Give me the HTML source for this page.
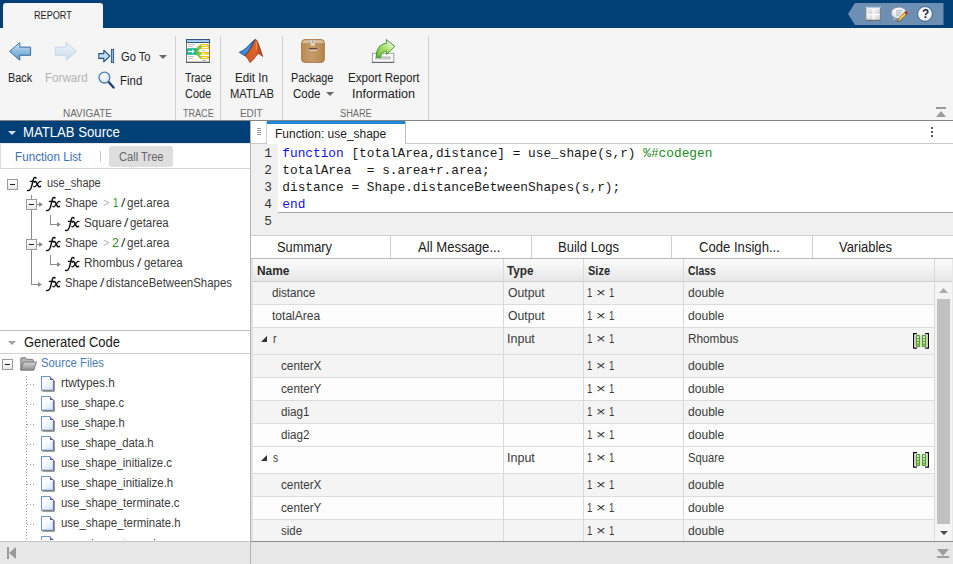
<!DOCTYPE html>
<html>
<head>
<meta charset="utf-8">
<title>Code Generation Report</title>
<style>
*{box-sizing:border-box;margin:0;padding:0}
html,body{width:953px;height:564px;overflow:hidden;background:#f5f5f5;font-family:"Liberation Sans",sans-serif;font-size:12px;color:#333}
.a{position:absolute}
.t{position:absolute;white-space:pre;line-height:1;transform-origin:0 0}
svg{position:absolute;overflow:visible}
</style>
</head>
<body>
<div class="a" style="left:0px;top:0px;width:953px;height:28px;background:#004076;"></div>
<div class="a" style="left:3px;top:3px;width:100px;height:26px;background:#f5f5f5;border-radius:3px 3px 0 0;"></div>
<svg style="left:848px;top:3px" width="96" height="22" viewBox="0 0 96 22"><polygon points="0,11 7,0 95.5,0 95.5,22 7,22" fill="#6d8fb3"/></svg>
<svg style="left:865px;top:6px" width="16" height="15" viewBox="0 0 16 15">
<defs><linearGradient id="lc" x1="0" y1="0" x2="1" y2="1"><stop offset="0" stop-color="#f6f6f6"/><stop offset="1" stop-color="#cfcfcf"/></linearGradient></defs>
<rect x="0.5" y="0.3" width="15.2" height="14.3" fill="#ffffff"/>
<rect x="0.5" y="0.4" width="15.2" height="1.9" fill="#a8cbee"/>
<path d="M0.5 0.4H15.7" stroke="#6f7b88" stroke-width="0.7"/>
<rect x="1.2" y="2.8" width="6.3" height="5" fill="url(#lc)"/><rect x="8.8" y="2.8" width="6.3" height="5" fill="url(#lc)"/>
<rect x="1.2" y="9" width="6.3" height="4.8" fill="url(#lc)"/><rect x="8.8" y="9" width="6.3" height="4.8" fill="url(#lc)"/>
<path d="M0.8 1.5V14.2H15.4V1.5" fill="none" stroke="#747474" stroke-width="1"/>
<path d="M0.5 14.5H15.7" stroke="#666" stroke-width="0.8"/>
</svg>
<svg style="left:890px;top:6px" width="18" height="17" viewBox="0 0 18 17">
<defs><radialGradient id="gb" cx="0.4" cy="0.3" r="0.8"><stop offset="0" stop-color="#ffffff"/><stop offset="1" stop-color="#cfd8e0"/></radialGradient></defs>
<path d="M3.6 12.2 L3.2 14.6 L6 13" fill="#e6ebef" stroke="#8593a0" stroke-width="0.6"/>
<ellipse cx="8.9" cy="7" rx="7.8" ry="5.9" fill="url(#gb)" stroke="#7e8b98" stroke-width="0.8"/>
<path d="M6 4.8H12M6 6.9H11.6M6 9H10" stroke="#8f979f" stroke-width="0.8"/>
<path d="M7.4 15.6 L8.4 12.6 L14.4 6.5 L16.4 8.4 L10.4 14.6 Z" fill="#f2b930" stroke="#6a4c10" stroke-width="0.6" stroke-linejoin="round"/>
<path d="M9.4 13.4 L15.2 7.4" stroke="#fbe28e" stroke-width="0.9"/>
<path d="M14.4 6.5 L15.2 5.7 Q16.2 5 17 5.9 Q17.7 6.8 17 7.7 L16.4 8.4 Z" fill="#d8362f" stroke="#7d1c14" stroke-width="0.5"/>
<path d="M7.4 15.6 L8.4 12.6 L10.4 14.6 Z" fill="#f1dcb0" stroke="#6a4c10" stroke-width="0.5"/>
<path d="M7.4 15.6 L7.8 14.4 L8.6 15.1 Z" fill="#222"/>
</svg>
<svg style="left:917px;top:6px" width="16" height="16" viewBox="0 0 16 16">
<defs><radialGradient id="gh" cx="0.4" cy="0.3" r="0.8"><stop offset="0" stop-color="#ffffff"/><stop offset="0.7" stop-color="#f2f4f8"/><stop offset="1" stop-color="#b5c3d6"/></radialGradient></defs>
<circle cx="8" cy="8" r="7.4" fill="url(#gh)" stroke="#274a7c" stroke-width="0.8"/>
</svg>
<div class="a" style="left:0px;top:28px;width:953px;height:92px;background:#f5f5f5;"></div>
<div class="a" style="left:0px;top:120px;width:953px;height:1px;background:#858585;"></div>
<div class="a" style="left:175px;top:36px;width:1px;height:84px;background:#d0d0d0;"></div>
<div class="a" style="left:220px;top:36px;width:1px;height:84px;background:#d0d0d0;"></div>
<div class="a" style="left:282px;top:36px;width:1px;height:84px;background:#d0d0d0;"></div>
<div class="a" style="left:428px;top:36px;width:1px;height:84px;background:#d0d0d0;"></div>
<svg style="left:8px;top:41px" width="24" height="21" viewBox="0 0 24 21">
<defs><linearGradient id="ga" x1="0" y1="0" x2="0" y2="1"><stop offset="0" stop-color="#d6e8f6"/><stop offset="0.5" stop-color="#8fbde0"/><stop offset="1" stop-color="#5f9acb"/></linearGradient>
<linearGradient id="gf" x1="0" y1="0" x2="0" y2="1"><stop offset="0" stop-color="#eef3f8"/><stop offset="1" stop-color="#ccdceb"/></linearGradient></defs>
<path d="M1.6 10.4 L11.8 1.6 L11.8 6.1 L22.6 6.1 L22.6 14.3 L11.8 14.3 L11.8 19.2 Z" fill="url(#ga)" stroke="#336fa6" stroke-width="1" stroke-linejoin="round"/>
</svg>
<svg style="left:54px;top:41px" width="24" height="21" viewBox="0 0 24 21">
<path d="M22.4 10.4 L12.2 1.6 L12.2 6.1 L1.4 6.1 L1.4 14.3 L12.2 14.3 L12.2 19.2 Z" fill="url(#gf)" stroke="#c6d6e6" stroke-width="1" stroke-linejoin="round"/>
</svg>
<svg style="left:98px;top:48px" width="17" height="16" viewBox="0 0 17 16">
<path d="M0.8 5.6 H5.8 V2.2 L11.8 8 L5.8 13.8 V10.4 H0.8 Z" fill="#c4ddf1" stroke="#1f5486" stroke-width="1.1" stroke-linejoin="round"/>
<rect x="13.4" y="1.4" width="2.2" height="13.2" fill="#8dbbe0" stroke="#1f5486" stroke-width="0.9"/>
</svg>
<svg style="left:159px;top:55px" width="8" height="4" viewBox="0 0 8 4"><polygon points="0,0 8,0 4,4" fill="#6a6a6a"/></svg>
<svg style="left:98px;top:71px" width="17" height="18" viewBox="0 0 17 18">
<defs><radialGradient id="gm" cx="0.4" cy="0.35" r="0.7"><stop offset="0" stop-color="#ffffff"/><stop offset="1" stop-color="#d5e4f1"/></radialGradient></defs>
<path d="M10.2 10.6 L15.6 16.6" stroke="#1d3f6a" stroke-width="2.3" stroke-linecap="round"/>
<circle cx="6.4" cy="6.6" r="5.4" fill="url(#gm)" stroke="#4a7fb2" stroke-width="1.3"/>
</svg>
<svg style="left:186px;top:39px" width="24" height="24" viewBox="0 0 24 24">
<defs><linearGradient id="tg" x1="0" y1="0" x2="1" y2="0"><stop offset="0" stop-color="#3db56e"/><stop offset="0.55" stop-color="#8cc63f"/><stop offset="1" stop-color="#c9c928"/></linearGradient></defs>
<rect x="0.5" y="0.5" width="23" height="23" fill="#ffffff" stroke="#6f757c"/>
<rect x="0" y="0" width="24" height="4" fill="#34567a"/>
<rect x="1" y="1.1" width="22" height="1.9" fill="#a9d3f4"/>
<rect x="0" y="22.7" width="24" height="1.3" fill="#555a60"/>
<path d="M2 5.6H8.8M2 7.6H7M2 17.6H8M2 19.6H7" stroke="#b9b9b9" stroke-width="0.9"/>
<path d="M16 11.6H19M16 21.5H20" stroke="#a9b0b8" stroke-width="0.9"/>
<path d="M9 9.2 C12.5 9 12.5 5.2 16.5 5 V9.8 C14 10 13 11 12.2 12 C13 12.6 14 13 16.5 13 V15.6 C15 15.7 14.6 16 14 16.4 C14.6 16.8 15 17 16.5 17 V20.2 C12.5 20 12.5 16 9 15.8 Z" fill="url(#tg)"/>
<rect x="15.6" y="5" width="7.4" height="4.8" fill="#fcc60e"/>
<rect x="15.6" y="13" width="7.4" height="2.6" fill="#fcc60e"/>
<rect x="15.6" y="17" width="7.4" height="3.2" fill="#fcc60e"/>
<path d="M16.2 6.6H21M16.2 8.5H22M16.2 14.4H19M16.2 18.6H21" stroke="#ffffff" stroke-width="0.9"/>
<rect x="1" y="9.2" width="8.6" height="6.6" fill="#19b891"/>
<path d="M2 12.5H6.5" stroke="#fff" stroke-width="1.3"/>
<path d="M6 10.2 L8.7 12.5 L6 14.8 Z" fill="#fff"/>
</svg>
<svg style="left:239px;top:39px" width="24" height="24" viewBox="0 0 24 24">
<defs><linearGradient id="ml1" x1="0" y1="1" x2="1" y2="0"><stop offset="0" stop-color="#2f7fd0"/><stop offset="0.5" stop-color="#3f97e2"/><stop offset="1" stop-color="#1b5fae"/></linearGradient>
<linearGradient id="ml2" x1="0" y1="0" x2="1" y2="0"><stop offset="0" stop-color="#d2571f"/><stop offset="0.55" stop-color="#dc632a"/><stop offset="1" stop-color="#b83a1a"/></linearGradient></defs>
<path d="M0.3 13.3 C3 12.4 5 10.8 7 9.2 C10.4 6.4 13 2.4 16.3 0.4 L17 1.2 L6.2 16.9 Z" fill="url(#ml1)" stroke="#174a86" stroke-width="0.9" stroke-linejoin="round"/>
<path d="M6.1 16.7 L9.3 13 C11 10.6 13 7.6 14.4 4.6 C15 3 15.8 1.4 16.6 0.6 C18 0.8 19.2 4.4 20.2 7 C21.2 9.8 22.4 13.6 23.7 17.5 C22 16.2 20.6 15 19.4 14.6 C17.4 16 16 18.4 14.6 20 C13.4 21.4 12.2 22.6 10.9 23.6 C9.6 20.6 8 18.2 6.1 16.7 Z" fill="url(#ml2)" stroke="#8b1d12" stroke-width="0.7" stroke-linejoin="round"/>
<path d="M17.2 2.6 C17.4 5.4 17.4 8.4 17.3 11.4" stroke="#f7b45e" stroke-width="1" fill="none" stroke-dasharray="1.6 0.5"/>
</svg>
<svg style="left:301px;top:39px" width="24" height="24" viewBox="0 0 24 24">
<defs><linearGradient id="pk" x1="0" y1="0" x2="1" y2="0"><stop offset="0" stop-color="#b98a55"/><stop offset="0.45" stop-color="#c69b68"/><stop offset="1" stop-color="#b4854f"/></linearGradient></defs>
<rect x="0.6" y="0.6" width="22.8" height="22.8" rx="3.4" fill="url(#pk)" stroke="#a6743e" stroke-width="0.9"/>
<path d="M1.2 4.2 Q1.2 1.2 4 1.2 H20 Q22.8 1.2 22.8 4.2 Z" fill="#dcc19c"/>
<path d="M1 4.4 H23" stroke="#b08a5c" stroke-width="0.6"/>
<rect x="9.8" y="0.9" width="4" height="5.8" fill="#e6ded2" opacity="0.9"/>
<rect x="11.3" y="1" width="1.2" height="3.2" fill="#8fa3bd"/>
<path d="M6 8V22M18 8V22" stroke="#cfa878" stroke-width="0.5" stroke-dasharray="1 1"/>
<rect x="8" y="9.2" width="8" height="1.4" fill="#4a3542"/>
<path d="M8.6 9.7H15.4" stroke="#b8343a" stroke-width="0.6" stroke-dasharray="0.8 0.8"/>
<rect x="8" y="10.6" width="8" height="1.1" fill="#efe5d6"/>
</svg>
<svg style="left:326px;top:92px" width="8" height="4" viewBox="0 0 8 4"><polygon points="0,0 8,0 4,4" fill="#6a6a6a"/></svg>
<svg style="left:371px;top:39px" width="24" height="24" viewBox="0 0 24 24">
<defs><linearGradient id="ex" x1="0" y1="1" x2="1" y2="0"><stop offset="0" stop-color="#5fb83a"/><stop offset="0.45" stop-color="#a9dc6c"/><stop offset="0.8" stop-color="#e4f6cf"/><stop offset="1" stop-color="#b9e58e"/></linearGradient></defs>
<rect x="1.4" y="14.3" width="21.4" height="9" fill="#fafafa" stroke="#9a9a9a" stroke-width="0.9"/>
<path d="M1 23.4 H23.2" stroke="#555" stroke-width="0.9"/>
<rect x="4" y="17.3" width="15.8" height="3.2" fill="#c6c6c6"/>
<path d="M5.4 18.4 C4.8 10 9 5 15.4 4.3 L15.4 0.5 L23.7 7.4 L15.7 15.4 L15.5 12.2 C12.4 12.4 10 14 9.8 18.4 Z" fill="url(#ex)" stroke="#2f8f22" stroke-width="0.9" stroke-linejoin="round"/>
</svg>
<div class="a" style="left:936px;top:107px;width:10px;height:2px;background:#9b9b9b;"></div>
<svg style="left:936px;top:111px" width="10" height="6" viewBox="0 0 10 6"><polygon points="0,6 10,6 5,0" fill="#9b9b9b"/></svg>
<div class="a" style="left:0px;top:121px;width:250px;height:443px;background:#ffffff;"></div>
<div class="a" style="left:0px;top:121px;width:250px;height:22px;background:#004076;"></div>
<svg style="left:8px;top:131px" width="8" height="4" viewBox="0 0 8 4"><polygon points="0,0 8,0 4,4" fill="#d4dde8"/></svg>
<div class="a" style="left:100px;top:151px;width:1px;height:11px;background:#c8c8c8;"></div>
<div class="a" style="left:109px;top:146px;width:64px;height:21px;background:#dedede;border-radius:3px;"></div>
<div class="a" style="left:0px;top:168px;width:250px;height:1px;background:#d6d6d6;"></div>
<div class="a" style="left:7px;top:179px;width:11px;height:11px;border:1px solid #9a9a9a;background:linear-gradient(#fdfdfd,#e9e9e9)"></div>
<div class="a" style="left:10px;top:184px;width:5px;height:1px;background:#222;"></div>
<div class="a" style="left:31px;top:195px;width:1px;height:89px;background:#8a8a8a;"></div>
<div class="a" style="left:26px;top:199px;width:11px;height:11px;border:1px solid #9a9a9a;background:linear-gradient(#fdfdfd,#e9e9e9)"></div>
<div class="a" style="left:29px;top:204px;width:5px;height:1px;background:#222;"></div>
<div class="a" style="left:26px;top:239px;width:11px;height:11px;border:1px solid #9a9a9a;background:linear-gradient(#fdfdfd,#e9e9e9)"></div>
<div class="a" style="left:29px;top:244px;width:5px;height:1px;background:#222;"></div>
<div class="a" style="left:37px;top:204px;width:3px;height:1px;background:#8a8a8a;"></div>
<svg style="left:39px;top:202px" width="4" height="5" viewBox="0 0 4 5"><polygon points="0,0 4,2.5 0,5" fill="#8a8a8a"/></svg>
<div class="a" style="left:37px;top:244px;width:3px;height:1px;background:#8a8a8a;"></div>
<svg style="left:39px;top:242px" width="4" height="5" viewBox="0 0 4 5"><polygon points="0,0 4,2.5 0,5" fill="#8a8a8a"/></svg>
<div class="a" style="left:31px;top:284px;width:8px;height:1px;background:#8a8a8a;"></div>
<svg style="left:38px;top:282px" width="4" height="5" viewBox="0 0 4 5"><polygon points="0,0 4,2.5 0,5" fill="#8a8a8a"/></svg>
<div class="a" style="left:50px;top:215px;width:1px;height:10px;background:#8a8a8a;"></div>
<div class="a" style="left:50px;top:224px;width:8px;height:1px;background:#8a8a8a;"></div>
<svg style="left:57px;top:222px" width="4" height="5" viewBox="0 0 4 5"><polygon points="0,0 4,2.5 0,5" fill="#8a8a8a"/></svg>
<div class="a" style="left:50px;top:255px;width:1px;height:10px;background:#8a8a8a;"></div>
<div class="a" style="left:50px;top:264px;width:8px;height:1px;background:#8a8a8a;"></div>
<svg style="left:57px;top:262px" width="4" height="5" viewBox="0 0 4 5"><polygon points="0,0 4,2.5 0,5" fill="#8a8a8a"/></svg>
<svg style="left:25.5px;top:176px" width="16" height="16" viewBox="0 0 16 16" fill="none" stroke="#111" stroke-linecap="round" stroke-linejoin="round">
<path d="M10 2.1 C9.6 1.3 8.6 1.1 8 1.9 C7.2 3.1 6.8 5.6 6.1 8.6 C5.5 11.2 5.1 12.9 4.1 13.8 C3.3 14.5 2.3 14.6 1.5 14.4" stroke-width="1.5"/>
<path d="M4.2 5.3 H8.6" stroke-width="1.15"/>
<path d="M8.4 5.9 C9 5.2 9.9 5.3 10.4 6.4 L12.2 9.8 C12.7 10.9 13.7 11 14.5 10.3" stroke-width="1.6"/>
<path d="M15 5.6 C14.3 5.1 13.5 5.3 12.9 6.1 L9.7 10.1 C9.1 10.9 8.4 11 7.8 10.5" stroke-width="1.2"/>
</svg>
<svg style="left:45.0px;top:196px" width="16" height="16" viewBox="0 0 16 16" fill="none" stroke="#111" stroke-linecap="round" stroke-linejoin="round">
<path d="M10 2.1 C9.6 1.3 8.6 1.1 8 1.9 C7.2 3.1 6.8 5.6 6.1 8.6 C5.5 11.2 5.1 12.9 4.1 13.8 C3.3 14.5 2.3 14.6 1.5 14.4" stroke-width="1.5"/>
<path d="M4.2 5.3 H8.6" stroke-width="1.15"/>
<path d="M8.4 5.9 C9 5.2 9.9 5.3 10.4 6.4 L12.2 9.8 C12.7 10.9 13.7 11 14.5 10.3" stroke-width="1.6"/>
<path d="M15 5.6 C14.3 5.1 13.5 5.3 12.9 6.1 L9.7 10.1 C9.1 10.9 8.4 11 7.8 10.5" stroke-width="1.2"/>
</svg>
<svg style="left:64.0px;top:216px" width="16" height="16" viewBox="0 0 16 16" fill="none" stroke="#111" stroke-linecap="round" stroke-linejoin="round">
<path d="M10 2.1 C9.6 1.3 8.6 1.1 8 1.9 C7.2 3.1 6.8 5.6 6.1 8.6 C5.5 11.2 5.1 12.9 4.1 13.8 C3.3 14.5 2.3 14.6 1.5 14.4" stroke-width="1.5"/>
<path d="M4.2 5.3 H8.6" stroke-width="1.15"/>
<path d="M8.4 5.9 C9 5.2 9.9 5.3 10.4 6.4 L12.2 9.8 C12.7 10.9 13.7 11 14.5 10.3" stroke-width="1.6"/>
<path d="M15 5.6 C14.3 5.1 13.5 5.3 12.9 6.1 L9.7 10.1 C9.1 10.9 8.4 11 7.8 10.5" stroke-width="1.2"/>
</svg>
<svg style="left:45.0px;top:236px" width="16" height="16" viewBox="0 0 16 16" fill="none" stroke="#111" stroke-linecap="round" stroke-linejoin="round">
<path d="M10 2.1 C9.6 1.3 8.6 1.1 8 1.9 C7.2 3.1 6.8 5.6 6.1 8.6 C5.5 11.2 5.1 12.9 4.1 13.8 C3.3 14.5 2.3 14.6 1.5 14.4" stroke-width="1.5"/>
<path d="M4.2 5.3 H8.6" stroke-width="1.15"/>
<path d="M8.4 5.9 C9 5.2 9.9 5.3 10.4 6.4 L12.2 9.8 C12.7 10.9 13.7 11 14.5 10.3" stroke-width="1.6"/>
<path d="M15 5.6 C14.3 5.1 13.5 5.3 12.9 6.1 L9.7 10.1 C9.1 10.9 8.4 11 7.8 10.5" stroke-width="1.2"/>
</svg>
<svg style="left:64.0px;top:256px" width="16" height="16" viewBox="0 0 16 16" fill="none" stroke="#111" stroke-linecap="round" stroke-linejoin="round">
<path d="M10 2.1 C9.6 1.3 8.6 1.1 8 1.9 C7.2 3.1 6.8 5.6 6.1 8.6 C5.5 11.2 5.1 12.9 4.1 13.8 C3.3 14.5 2.3 14.6 1.5 14.4" stroke-width="1.5"/>
<path d="M4.2 5.3 H8.6" stroke-width="1.15"/>
<path d="M8.4 5.9 C9 5.2 9.9 5.3 10.4 6.4 L12.2 9.8 C12.7 10.9 13.7 11 14.5 10.3" stroke-width="1.6"/>
<path d="M15 5.6 C14.3 5.1 13.5 5.3 12.9 6.1 L9.7 10.1 C9.1 10.9 8.4 11 7.8 10.5" stroke-width="1.2"/>
</svg>
<svg style="left:45.0px;top:276px" width="16" height="16" viewBox="0 0 16 16" fill="none" stroke="#111" stroke-linecap="round" stroke-linejoin="round">
<path d="M10 2.1 C9.6 1.3 8.6 1.1 8 1.9 C7.2 3.1 6.8 5.6 6.1 8.6 C5.5 11.2 5.1 12.9 4.1 13.8 C3.3 14.5 2.3 14.6 1.5 14.4" stroke-width="1.5"/>
<path d="M4.2 5.3 H8.6" stroke-width="1.15"/>
<path d="M8.4 5.9 C9 5.2 9.9 5.3 10.4 6.4 L12.2 9.8 C12.7 10.9 13.7 11 14.5 10.3" stroke-width="1.6"/>
<path d="M15 5.6 C14.3 5.1 13.5 5.3 12.9 6.1 L9.7 10.1 C9.1 10.9 8.4 11 7.8 10.5" stroke-width="1.2"/>
</svg>
<div class="a" style="left:0px;top:330px;width:250px;height:1px;background:#bdbdbd;"></div>
<div class="a" style="left:0px;top:353px;width:250px;height:1px;background:#d0d0d0;"></div>
<svg style="left:8px;top:341px" width="8" height="4" viewBox="0 0 8 4"><polygon points="0,0 8,0 4,4" fill="#a0a0a0"/></svg>
<div class="a" style="left:2px;top:359px;width:11px;height:11px;border:1px solid #9a9a9a;background:linear-gradient(#fdfdfd,#e9e9e9)"></div>
<div class="a" style="left:5px;top:364px;width:5px;height:1px;background:#222;"></div>
<svg style="left:20px;top:357px" width="17" height="14" viewBox="0 0 17 14">
<defs><linearGradient id="fo" x1="0" y1="0" x2="0" y2="1"><stop offset="0" stop-color="#d8d8d8"/><stop offset="1" stop-color="#8e8e8e"/></linearGradient></defs>
<path d="M0.8 13 V1.6 Q0.8 0.8 1.6 0.8 H5.6 L6.8 2.4 H12.6 Q13.4 2.4 13.4 3.2 V5" fill="#b5b5b5" stroke="#6f6f6f" stroke-width="0.9"/>
<path d="M0.8 13.2 L3.4 5 H16.4 L13.8 13.2 Z" fill="url(#fo)" stroke="#6f6f6f" stroke-width="0.9" stroke-linejoin="round"/>
</svg>
<div class="a" style="left:26px;top:376px;width:1px;height:165px;background:repeating-linear-gradient(#9c9c9c 0 1px,transparent 1px 3px)"></div>
<div class="a" style="left:27px;top:384px;width:9px;height:1px;background:repeating-linear-gradient(90deg,#9c9c9c 0 1px,transparent 1px 3px)"></div>
<svg style="left:41px;top:376px" width="15" height="17" viewBox="0 0 15 17">
<defs><linearGradient id="fi0" x1="0" y1="0" x2="0.8" y2="1"><stop offset="0.35" stop-color="#ffffff"/><stop offset="1" stop-color="#d3e8ff"/></linearGradient></defs>
<path d="M1.6 15.4 H13.5 V4.6" fill="none" stroke="#9a9a7c" stroke-width="1"/>
<path d="M0.5 0.5 H9.2 L12.5 3.8 V14.4 H0.5 Z" fill="url(#fi0)"/>
<path d="M12.4 3.8 V14.3 H0.5" fill="none" stroke="#5c5c9e" stroke-width="1"/>
<path d="M0.5 14.3 V0.5 H9.2" fill="none" stroke="#6b8fd8" stroke-width="1"/>
<path d="M9 0.3 L12.7 4 H9 Z" fill="#5a5ca4"/>
<rect x="9.8" y="2.2" width="0.9" height="0.9" fill="#9fc0ee"/>
</svg>
<div class="a" style="left:27px;top:404px;width:9px;height:1px;background:repeating-linear-gradient(90deg,#9c9c9c 0 1px,transparent 1px 3px)"></div>
<svg style="left:41px;top:396px" width="15" height="17" viewBox="0 0 15 17">
<defs><linearGradient id="fi1" x1="0" y1="0" x2="0.8" y2="1"><stop offset="0.35" stop-color="#ffffff"/><stop offset="1" stop-color="#d3e8ff"/></linearGradient></defs>
<path d="M1.6 15.4 H13.5 V4.6" fill="none" stroke="#9a9a7c" stroke-width="1"/>
<path d="M0.5 0.5 H9.2 L12.5 3.8 V14.4 H0.5 Z" fill="url(#fi1)"/>
<path d="M12.4 3.8 V14.3 H0.5" fill="none" stroke="#5c5c9e" stroke-width="1"/>
<path d="M0.5 14.3 V0.5 H9.2" fill="none" stroke="#6b8fd8" stroke-width="1"/>
<path d="M9 0.3 L12.7 4 H9 Z" fill="#5a5ca4"/>
<rect x="9.8" y="2.2" width="0.9" height="0.9" fill="#9fc0ee"/>
</svg>
<div class="a" style="left:27px;top:424px;width:9px;height:1px;background:repeating-linear-gradient(90deg,#9c9c9c 0 1px,transparent 1px 3px)"></div>
<svg style="left:41px;top:416px" width="15" height="17" viewBox="0 0 15 17">
<defs><linearGradient id="fi2" x1="0" y1="0" x2="0.8" y2="1"><stop offset="0.35" stop-color="#ffffff"/><stop offset="1" stop-color="#d3e8ff"/></linearGradient></defs>
<path d="M1.6 15.4 H13.5 V4.6" fill="none" stroke="#9a9a7c" stroke-width="1"/>
<path d="M0.5 0.5 H9.2 L12.5 3.8 V14.4 H0.5 Z" fill="url(#fi2)"/>
<path d="M12.4 3.8 V14.3 H0.5" fill="none" stroke="#5c5c9e" stroke-width="1"/>
<path d="M0.5 14.3 V0.5 H9.2" fill="none" stroke="#6b8fd8" stroke-width="1"/>
<path d="M9 0.3 L12.7 4 H9 Z" fill="#5a5ca4"/>
<rect x="9.8" y="2.2" width="0.9" height="0.9" fill="#9fc0ee"/>
</svg>
<div class="a" style="left:27px;top:444px;width:9px;height:1px;background:repeating-linear-gradient(90deg,#9c9c9c 0 1px,transparent 1px 3px)"></div>
<svg style="left:41px;top:436px" width="15" height="17" viewBox="0 0 15 17">
<defs><linearGradient id="fi3" x1="0" y1="0" x2="0.8" y2="1"><stop offset="0.35" stop-color="#ffffff"/><stop offset="1" stop-color="#d3e8ff"/></linearGradient></defs>
<path d="M1.6 15.4 H13.5 V4.6" fill="none" stroke="#9a9a7c" stroke-width="1"/>
<path d="M0.5 0.5 H9.2 L12.5 3.8 V14.4 H0.5 Z" fill="url(#fi3)"/>
<path d="M12.4 3.8 V14.3 H0.5" fill="none" stroke="#5c5c9e" stroke-width="1"/>
<path d="M0.5 14.3 V0.5 H9.2" fill="none" stroke="#6b8fd8" stroke-width="1"/>
<path d="M9 0.3 L12.7 4 H9 Z" fill="#5a5ca4"/>
<rect x="9.8" y="2.2" width="0.9" height="0.9" fill="#9fc0ee"/>
</svg>
<div class="a" style="left:27px;top:464px;width:9px;height:1px;background:repeating-linear-gradient(90deg,#9c9c9c 0 1px,transparent 1px 3px)"></div>
<svg style="left:41px;top:456px" width="15" height="17" viewBox="0 0 15 17">
<defs><linearGradient id="fi4" x1="0" y1="0" x2="0.8" y2="1"><stop offset="0.35" stop-color="#ffffff"/><stop offset="1" stop-color="#d3e8ff"/></linearGradient></defs>
<path d="M1.6 15.4 H13.5 V4.6" fill="none" stroke="#9a9a7c" stroke-width="1"/>
<path d="M0.5 0.5 H9.2 L12.5 3.8 V14.4 H0.5 Z" fill="url(#fi4)"/>
<path d="M12.4 3.8 V14.3 H0.5" fill="none" stroke="#5c5c9e" stroke-width="1"/>
<path d="M0.5 14.3 V0.5 H9.2" fill="none" stroke="#6b8fd8" stroke-width="1"/>
<path d="M9 0.3 L12.7 4 H9 Z" fill="#5a5ca4"/>
<rect x="9.8" y="2.2" width="0.9" height="0.9" fill="#9fc0ee"/>
</svg>
<div class="a" style="left:27px;top:484px;width:9px;height:1px;background:repeating-linear-gradient(90deg,#9c9c9c 0 1px,transparent 1px 3px)"></div>
<svg style="left:41px;top:476px" width="15" height="17" viewBox="0 0 15 17">
<defs><linearGradient id="fi5" x1="0" y1="0" x2="0.8" y2="1"><stop offset="0.35" stop-color="#ffffff"/><stop offset="1" stop-color="#d3e8ff"/></linearGradient></defs>
<path d="M1.6 15.4 H13.5 V4.6" fill="none" stroke="#9a9a7c" stroke-width="1"/>
<path d="M0.5 0.5 H9.2 L12.5 3.8 V14.4 H0.5 Z" fill="url(#fi5)"/>
<path d="M12.4 3.8 V14.3 H0.5" fill="none" stroke="#5c5c9e" stroke-width="1"/>
<path d="M0.5 14.3 V0.5 H9.2" fill="none" stroke="#6b8fd8" stroke-width="1"/>
<path d="M9 0.3 L12.7 4 H9 Z" fill="#5a5ca4"/>
<rect x="9.8" y="2.2" width="0.9" height="0.9" fill="#9fc0ee"/>
</svg>
<div class="a" style="left:27px;top:504px;width:9px;height:1px;background:repeating-linear-gradient(90deg,#9c9c9c 0 1px,transparent 1px 3px)"></div>
<svg style="left:41px;top:496px" width="15" height="17" viewBox="0 0 15 17">
<defs><linearGradient id="fi6" x1="0" y1="0" x2="0.8" y2="1"><stop offset="0.35" stop-color="#ffffff"/><stop offset="1" stop-color="#d3e8ff"/></linearGradient></defs>
<path d="M1.6 15.4 H13.5 V4.6" fill="none" stroke="#9a9a7c" stroke-width="1"/>
<path d="M0.5 0.5 H9.2 L12.5 3.8 V14.4 H0.5 Z" fill="url(#fi6)"/>
<path d="M12.4 3.8 V14.3 H0.5" fill="none" stroke="#5c5c9e" stroke-width="1"/>
<path d="M0.5 14.3 V0.5 H9.2" fill="none" stroke="#6b8fd8" stroke-width="1"/>
<path d="M9 0.3 L12.7 4 H9 Z" fill="#5a5ca4"/>
<rect x="9.8" y="2.2" width="0.9" height="0.9" fill="#9fc0ee"/>
</svg>
<div class="a" style="left:27px;top:524px;width:9px;height:1px;background:repeating-linear-gradient(90deg,#9c9c9c 0 1px,transparent 1px 3px)"></div>
<svg style="left:41px;top:516px" width="15" height="17" viewBox="0 0 15 17">
<defs><linearGradient id="fi7" x1="0" y1="0" x2="0.8" y2="1"><stop offset="0.35" stop-color="#ffffff"/><stop offset="1" stop-color="#d3e8ff"/></linearGradient></defs>
<path d="M1.6 15.4 H13.5 V4.6" fill="none" stroke="#9a9a7c" stroke-width="1"/>
<path d="M0.5 0.5 H9.2 L12.5 3.8 V14.4 H0.5 Z" fill="url(#fi7)"/>
<path d="M12.4 3.8 V14.3 H0.5" fill="none" stroke="#5c5c9e" stroke-width="1"/>
<path d="M0.5 14.3 V0.5 H9.2" fill="none" stroke="#6b8fd8" stroke-width="1"/>
<path d="M9 0.3 L12.7 4 H9 Z" fill="#5a5ca4"/>
<rect x="9.8" y="2.2" width="0.9" height="0.9" fill="#9fc0ee"/>
</svg>
<div class="a" style="left:27px;top:544px;width:9px;height:1px;background:repeating-linear-gradient(90deg,#9c9c9c 0 1px,transparent 1px 3px)"></div>
<svg style="left:41px;top:536px" width="15" height="17" viewBox="0 0 15 17">
<defs><linearGradient id="fi8" x1="0" y1="0" x2="0.8" y2="1"><stop offset="0.35" stop-color="#ffffff"/><stop offset="1" stop-color="#d3e8ff"/></linearGradient></defs>
<path d="M1.6 15.4 H13.5 V4.6" fill="none" stroke="#9a9a7c" stroke-width="1"/>
<path d="M0.5 0.5 H9.2 L12.5 3.8 V14.4 H0.5 Z" fill="url(#fi8)"/>
<path d="M12.4 3.8 V14.3 H0.5" fill="none" stroke="#5c5c9e" stroke-width="1"/>
<path d="M0.5 14.3 V0.5 H9.2" fill="none" stroke="#6b8fd8" stroke-width="1"/>
<path d="M9 0.3 L12.7 4 H9 Z" fill="#5a5ca4"/>
<rect x="9.8" y="2.2" width="0.9" height="0.9" fill="#9fc0ee"/>
</svg>
<div class="a" style="left:0px;top:540px;width:250px;height:1px;background:#ffffff;z-index:5;"></div>
<div class="a" style="left:0px;top:541px;width:250px;height:1px;background:#c6c6c6;z-index:5;"></div>
<div class="a" style="left:0px;top:542px;width:250px;height:22px;background:#e7e7e7;z-index:5;"></div>
<div class="a" style="left:7px;top:547px;width:2px;height:12px;background:#9a9a9a;z-index:6;"></div>
<svg style="z-index:6;left:9px;top:547px" width="7" height="12" viewBox="0 0 7 12"><polygon points="7,0 7,12 0,6" fill="#9a9a9a"/></svg>
<div class="a" style="left:0px;top:143px;width:1px;height:26px;background:#dcdcdc;"></div>
<div class="a" style="left:0px;top:143px;width:250px;height:1px;background:#e9e9e9;"></div>
<div class="a" style="left:250px;top:121px;width:1px;height:443px;background:#b4b4b4;"></div>
<div class="a" style="left:251px;top:121px;width:702px;height:443px;background:#ffffff;"></div>
<div class="a" style="left:251px;top:143px;width:702px;height:1px;background:#c9c9c9;"></div>
<div class="a" style="left:266px;top:121px;width:1px;height:22px;background:#d0d0d0;"></div>
<div class="a" style="left:257px;top:128px;width:4px;height:1px;background:#9a9a9a;"></div>
<div class="a" style="left:257px;top:130px;width:4px;height:1px;background:#9a9a9a;"></div>
<div class="a" style="left:257px;top:132px;width:4px;height:1px;background:#9a9a9a;"></div>
<div class="a" style="left:257px;top:134px;width:4px;height:1px;background:#9a9a9a;"></div>
<div class="a" style="left:267px;top:121px;width:138px;height:3px;background:#1f86d8;"></div>
<div class="a" style="left:405px;top:121px;width:1px;height:22px;background:#bdbdbd;"></div>
<div class="a" style="left:267px;top:143px;width:138px;height:1px;background:#ffffff;"></div>
<div class="a" style="left:931px;top:127px;width:2px;height:2px;background:#5a5a5a;"></div>
<div class="a" style="left:931px;top:131px;width:2px;height:2px;background:#5a5a5a;"></div>
<div class="a" style="left:931px;top:135px;width:2px;height:2px;background:#5a5a5a;"></div>
<div class="a" style="left:251px;top:144px;width:27px;height:92px;background:#f0f0f0;"></div>
<div class="a" style="left:278px;top:213px;width:675px;height:23px;background:#f0f0f0;"></div>
<div class="a" style="left:278px;top:212px;width:675px;height:1px;background:#a9a9a9;"></div>
<div class="a" style="left:251px;top:235px;width:702px;height:1px;background:#cfcfcf;"></div>
<div class="a" style="left:251px;top:236px;width:702px;height:22px;background:#ffffff;"></div>
<div class="a" style="left:251px;top:258px;width:702px;height:1px;background:#b9b9b9;"></div>
<div class="a" style="left:390px;top:236px;width:1px;height:22px;background:#cfcfcf;"></div>
<div class="a" style="left:531px;top:236px;width:1px;height:22px;background:#cfcfcf;"></div>
<div class="a" style="left:671px;top:236px;width:1px;height:22px;background:#cfcfcf;"></div>
<div class="a" style="left:812px;top:236px;width:1px;height:22px;background:#cfcfcf;"></div>
<div class="a" style="left:251px;top:259px;width:2px;height:283px;background:#e2e2e2;"></div>
<div class="a" style="left:253px;top:259px;width:682px;height:22px;background:linear-gradient(#fbfbfb,#f3f3f3 45%,#e6e6e6);"></div>
<div class="a" style="left:935px;top:259px;width:18px;height:22px;background:linear-gradient(#fbfbfb,#f3f3f3 45%,#e6e6e6);"></div>
<div class="a" style="left:253px;top:281px;width:700px;height:1px;background:#cdcdcd;"></div>
<div class="a" style="left:935px;top:282px;width:18px;height:259px;background:#f4f4f4;"></div>
<div class="a" style="left:253px;top:282px;width:682px;height:22px;background:#f4f4f4;"></div>
<div class="a" style="left:253px;top:304px;width:682px;height:1px;background:#dcdcdc;"></div>
<div class="a" style="left:253px;top:305px;width:682px;height:22px;background:#fdfdfd;"></div>
<div class="a" style="left:253px;top:327px;width:682px;height:1px;background:#dcdcdc;"></div>
<div class="a" style="left:253px;top:328px;width:682px;height:26px;background:#f4f4f4;"></div>
<div class="a" style="left:253px;top:354px;width:682px;height:1px;background:#dcdcdc;"></div>
<svg style="left:261px;top:336px" width="6" height="6" viewBox="0 0 6 6"><polygon points="6,0 6,6 0,6" fill="#333"/></svg>
<svg style="left:913px;top:333px" width="16" height="16" viewBox="0 0 16 16">
<path d="M4 0.6 H0.6 V15.2 H4 M12.1 0.6 H15.4 V15.2 H12.1" fill="none" stroke="#ffffff" stroke-width="2.6" opacity="0.9"/>
<path d="M4 0.6 H0.6 V15.2 H4 M12.1 0.6 H15.4 V15.2 H12.1" fill="none" stroke="#0a0a0a" stroke-width="1.2"/>
<rect x="3.1" y="2.3" width="3.7" height="11.4" rx="0.5" fill="#5ca336" stroke="#3f8526" stroke-width="0.7"/>
<rect x="9.2" y="2.3" width="3.7" height="11.4" rx="0.5" fill="#5ca336" stroke="#3f8526" stroke-width="0.7"/>
<rect x="4.1" y="3.2" width="1.7" height="1.7" fill="#ffffff"/><rect x="4.1" y="6.1" width="1.7" height="1.7" fill="#f1fbd6"/><rect x="4.1" y="9" width="1.7" height="1.7" fill="#d9f08c"/><rect x="4.1" y="11.7" width="1.7" height="1.2" fill="#b5df4e"/>
<rect x="10.2" y="3.2" width="1.7" height="1.7" fill="#ffffff"/><rect x="10.2" y="6.1" width="1.7" height="1.7" fill="#f1fbd6"/><rect x="10.2" y="9" width="1.7" height="1.7" fill="#d9f08c"/><rect x="10.2" y="11.7" width="1.7" height="1.2" fill="#b5df4e"/>
</svg>
<div class="a" style="left:253px;top:355px;width:682px;height:22px;background:#f4f4f4;"></div>
<div class="a" style="left:253px;top:377px;width:682px;height:1px;background:#dcdcdc;"></div>
<div class="a" style="left:253px;top:378px;width:682px;height:22px;background:#fdfdfd;"></div>
<div class="a" style="left:253px;top:400px;width:682px;height:1px;background:#dcdcdc;"></div>
<div class="a" style="left:253px;top:401px;width:682px;height:22px;background:#f4f4f4;"></div>
<div class="a" style="left:253px;top:423px;width:682px;height:1px;background:#dcdcdc;"></div>
<div class="a" style="left:253px;top:424px;width:682px;height:22px;background:#fdfdfd;"></div>
<div class="a" style="left:253px;top:446px;width:682px;height:1px;background:#dcdcdc;"></div>
<div class="a" style="left:253px;top:447px;width:682px;height:26px;background:#fdfdfd;"></div>
<div class="a" style="left:253px;top:473px;width:682px;height:1px;background:#dcdcdc;"></div>
<svg style="left:261px;top:455px" width="6" height="6" viewBox="0 0 6 6"><polygon points="6,0 6,6 0,6" fill="#333"/></svg>
<svg style="left:913px;top:452px" width="16" height="16" viewBox="0 0 16 16">
<path d="M4 0.6 H0.6 V15.2 H4 M12.1 0.6 H15.4 V15.2 H12.1" fill="none" stroke="#ffffff" stroke-width="2.6" opacity="0.9"/>
<path d="M4 0.6 H0.6 V15.2 H4 M12.1 0.6 H15.4 V15.2 H12.1" fill="none" stroke="#0a0a0a" stroke-width="1.2"/>
<rect x="3.1" y="2.3" width="3.7" height="11.4" rx="0.5" fill="#5ca336" stroke="#3f8526" stroke-width="0.7"/>
<rect x="9.2" y="2.3" width="3.7" height="11.4" rx="0.5" fill="#5ca336" stroke="#3f8526" stroke-width="0.7"/>
<rect x="4.1" y="3.2" width="1.7" height="1.7" fill="#ffffff"/><rect x="4.1" y="6.1" width="1.7" height="1.7" fill="#f1fbd6"/><rect x="4.1" y="9" width="1.7" height="1.7" fill="#d9f08c"/><rect x="4.1" y="11.7" width="1.7" height="1.2" fill="#b5df4e"/>
<rect x="10.2" y="3.2" width="1.7" height="1.7" fill="#ffffff"/><rect x="10.2" y="6.1" width="1.7" height="1.7" fill="#f1fbd6"/><rect x="10.2" y="9" width="1.7" height="1.7" fill="#d9f08c"/><rect x="10.2" y="11.7" width="1.7" height="1.2" fill="#b5df4e"/>
</svg>
<div class="a" style="left:253px;top:474px;width:682px;height:22px;background:#f4f4f4;"></div>
<div class="a" style="left:253px;top:496px;width:682px;height:1px;background:#dcdcdc;"></div>
<div class="a" style="left:253px;top:497px;width:682px;height:22px;background:#fdfdfd;"></div>
<div class="a" style="left:253px;top:519px;width:682px;height:1px;background:#dcdcdc;"></div>
<div class="a" style="left:253px;top:520px;width:682px;height:21px;background:#f4f4f4;"></div>
<div class="a" style="left:253px;top:541px;width:682px;height:1px;background:#dcdcdc;"></div>
<div class="a" style="left:503px;top:259px;width:1px;height:282px;background:#d9d9d9;"></div>
<div class="a" style="left:583px;top:259px;width:1px;height:282px;background:#d9d9d9;"></div>
<div class="a" style="left:683px;top:259px;width:1px;height:282px;background:#d9d9d9;"></div>
<div class="a" style="left:934px;top:259px;width:1px;height:282px;background:#d9d9d9;"></div>
<svg style="left:939px;top:288px" width="9" height="5" viewBox="0 0 9 5"><polygon points="0,5 9,5 4.5,0" fill="#a9a9a9"/></svg>
<div class="a" style="left:937px;top:299px;width:13px;height:225px;background:#c1c1c1;"></div>
<svg style="left:940px;top:531px" width="8" height="4" viewBox="0 0 8 4"><polygon points="0,0 8,0 4,4" fill="#4a4a4a"/></svg>
<div class="a" style="left:251px;top:541px;width:702px;height:1px;background:#8c8c8c;"></div>
<div class="a" style="left:251px;top:542px;width:702px;height:22px;background:#e7e7e7;"></div>
<div class="a" style="left:952px;top:259px;width:1px;height:282px;background:#e7e7e7;"></div>
<svg style="left:937px;top:549px" width="12" height="7" viewBox="0 0 12 7"><polygon points="0,0 12,0 6,7" fill="#9e9e9e"/></svg>
<div class="a" style="left:937px;top:556px;width:12px;height:2px;background:#9e9e9e;"></div>
<div class="t" style="left:34.00px;top:10.29px;font-size:11px;color:#222;transform:scaleX(0.8275);">REPORT</div>
<div class="t" style="left:921.60px;top:7.47px;font-size:13.5px;color:#1b2450;font-weight:bold;transform:scaleX(0.8750);">?</div>
<div class="t" style="left:8.00px;top:71.84px;font-size:12px;color:#222;transform:scaleX(0.9033);">Back</div>
<div class="t" style="left:45.00px;top:71.84px;font-size:12px;color:#b4b4b4;transform:scaleX(0.9692);">Forward</div>
<div class="t" style="left:121.00px;top:51.14px;font-size:12px;color:#222;transform:scaleX(0.9276);">Go To</div>
<div class="t" style="left:120.30px;top:75.14px;font-size:12px;color:#222;transform:scaleX(0.9528);">Find</div>
<div class="t" style="left:184.50px;top:71.84px;font-size:12px;color:#222;transform:scaleX(0.8837);">Trace</div>
<div class="t" style="left:185.00px;top:87.84px;font-size:12px;color:#222;transform:scaleX(0.9134);">Code</div>
<div class="t" style="left:235.40px;top:71.84px;font-size:12px;color:#222;transform:scaleX(0.9686);">Edit In</div>
<div class="t" style="left:229.50px;top:87.84px;font-size:12px;color:#222;transform:scaleX(0.9338);">MATLAB</div>
<div class="t" style="left:291.40px;top:71.84px;font-size:12px;color:#222;transform:scaleX(0.9059);">Package</div>
<div class="t" style="left:292.60px;top:87.84px;font-size:12px;color:#222;transform:scaleX(0.9547);">Code</div>
<div class="t" style="left:347.50px;top:71.84px;font-size:12px;color:#222;transform:scaleX(0.9665);">Export Report</div>
<div class="t" style="left:351.95px;top:87.84px;font-size:12px;color:#222;transform:scaleX(1.0505);">Information</div>
<div class="t" style="left:63.30px;top:108.83px;font-size:10px;color:#6a6a6a;transform:scaleX(0.9957);">NAVIGATE</div>
<div class="t" style="left:182.50px;top:108.83px;font-size:10px;color:#6a6a6a;transform:scaleX(0.9059);">TRACE</div>
<div class="t" style="left:240.00px;top:108.83px;font-size:10px;color:#6a6a6a;transform:scaleX(0.9925);">EDIT</div>
<div class="t" style="left:339.50px;top:108.83px;font-size:10px;color:#6a6a6a;transform:scaleX(0.9200);">SHARE</div>
<div class="t" style="left:22.66px;top:125.45px;font-size:14px;color:#ffffff;transform:scaleX(0.9391);">MATLAB Source</div>
<div class="t" style="left:15.00px;top:151.14px;font-size:12px;color:#3a6fb5;transform:scaleX(0.9753);">Function List</div>
<div class="t" style="left:118.50px;top:151.14px;font-size:12px;color:#666;transform:scaleX(0.9267);">Call Tree</div>
<div class="t" style="left:46.80px;top:176.84px;font-size:12px;color:#3c3c3c;transform:scaleX(0.9146);">use_shape</div>
<div class="t" style="left:64.80px;top:196.84px;font-size:12px;color:#3c3c3c;transform:scaleX(0.9365);">Shape</div>
<div class="t" style="left:102.90px;top:196.84px;font-size:12px;color:#b8b8b8;transform:scaleX(0.9143);">&gt;</div>
<div class="t" style="left:112.60px;top:196.84px;font-size:12px;color:#2a8c2a;transform:scaleX(0.8000);">1</div>
<div class="t" style="left:120.60px;top:196.84px;font-size:12px;color:#3c3c3c;transform:scaleX(1.3000);">/</div>
<div class="t" style="left:126.80px;top:196.84px;font-size:12px;color:#3c3c3c;transform:scaleX(0.9603);">get.area</div>
<div class="t" style="left:84.30px;top:216.84px;font-size:12px;color:#3c3c3c;transform:scaleX(0.9738);">Square</div>
<div class="t" style="left:124.30px;top:216.84px;font-size:12px;color:#3c3c3c;transform:scaleX(1.3000);">/</div>
<div class="t" style="left:130.00px;top:216.84px;font-size:12px;color:#3c3c3c;transform:scaleX(0.9506);">getarea</div>
<div class="t" style="left:64.80px;top:236.84px;font-size:12px;color:#3c3c3c;transform:scaleX(0.9365);">Shape</div>
<div class="t" style="left:102.90px;top:236.84px;font-size:12px;color:#b8b8b8;transform:scaleX(0.9143);">&gt;</div>
<div class="t" style="left:112.30px;top:236.84px;font-size:12px;color:#2a8c2a;transform:scaleX(1.0286);">2</div>
<div class="t" style="left:120.60px;top:236.84px;font-size:12px;color:#3c3c3c;transform:scaleX(1.3000);">/</div>
<div class="t" style="left:126.80px;top:236.84px;font-size:12px;color:#3c3c3c;transform:scaleX(0.9603);">get.area</div>
<div class="t" style="left:84.30px;top:256.84px;font-size:12px;color:#3c3c3c;transform:scaleX(0.9833);">Rhombus</div>
<div class="t" style="left:137.20px;top:256.84px;font-size:12px;color:#3c3c3c;transform:scaleX(1.3000);">/</div>
<div class="t" style="left:143.60px;top:256.84px;font-size:12px;color:#3c3c3c;transform:scaleX(0.9506);">getarea</div>
<div class="t" style="left:64.80px;top:276.84px;font-size:12px;color:#3c3c3c;transform:scaleX(0.9365);">Shape</div>
<div class="t" style="left:99.60px;top:276.84px;font-size:12px;color:#3c3c3c;transform:scaleX(1.3000);">/</div>
<div class="t" style="left:106.00px;top:276.84px;font-size:12px;color:#3c3c3c;transform:scaleX(0.9539);">distanceBetweenShapes</div>
<div class="t" style="left:23.60px;top:334.85px;font-size:14px;color:#1a1a1a;transform:scaleX(0.9274);">Generated Code</div>
<div class="t" style="left:40.80px;top:356.54px;font-size:12px;color:#4a7db3;transform:scaleX(0.9446);">Source Files</div>
<div class="t" style="left:60.80px;top:376.54px;font-size:12px;color:#3c3c3c;transform:scaleX(0.9850);">rtwtypes.h</div>
<div class="t" style="left:60.80px;top:396.54px;font-size:12px;color:#3c3c3c;transform:scaleX(0.9258);">use_shape.c</div>
<div class="t" style="left:60.80px;top:416.54px;font-size:12px;color:#3c3c3c;transform:scaleX(0.9258);">use_shape.h</div>
<div class="t" style="left:60.80px;top:436.54px;font-size:12px;color:#3c3c3c;transform:scaleX(0.9380);">use_shape_data.h</div>
<div class="t" style="left:60.80px;top:456.54px;font-size:12px;color:#3c3c3c;transform:scaleX(0.9454);">use_shape_initialize.c</div>
<div class="t" style="left:60.80px;top:476.54px;font-size:12px;color:#3c3c3c;transform:scaleX(0.9497);">use_shape_initialize.h</div>
<div class="t" style="left:60.80px;top:496.54px;font-size:12px;color:#3c3c3c;transform:scaleX(0.9499);">use_shape_terminate.c</div>
<div class="t" style="left:60.80px;top:516.54px;font-size:12px;color:#3c3c3c;transform:scaleX(0.9539);">use_shape_terminate.h</div>
<div class="t" style="left:60.80px;top:537.84px;font-size:12px;color:#3c3c3c;transform:scaleX(0.9477);">use_shape_types.h</div>
<div class="t" style="left:275.00px;top:127.94px;font-size:12px;color:#222;transform:scaleX(0.9979);">Function: use_shape</div>
<div class="t" style="left:264.20px;top:147.69px;font-size:12.8px;color:#333;font-family:'Liberation Mono',monospace;">1</div>
<div class="t" style="left:264.20px;top:164.69px;font-size:12.8px;color:#333;font-family:'Liberation Mono',monospace;">2</div>
<div class="t" style="left:264.20px;top:181.69px;font-size:12.8px;color:#333;font-family:'Liberation Mono',monospace;">3</div>
<div class="t" style="left:264.20px;top:198.69px;font-size:12.8px;color:#333;font-family:'Liberation Mono',monospace;">4</div>
<div class="t" style="left:264.20px;top:215.69px;font-size:12.8px;color:#333;font-family:'Liberation Mono',monospace;">5</div>
<div class="t" style="left:282.30px;top:147.69px;font-size:12.8px;color:#1111ee;font-family:'Liberation Mono',monospace;">function</div>
<div class="t" style="left:351.42px;top:147.69px;font-size:12.8px;color:#1a1a1a;font-family:'Liberation Mono',monospace;">[totalArea,distance] = use_shape(s,r)</div>
<div class="t" style="left:643.26px;top:147.69px;font-size:12.8px;color:#228b22;font-family:'Liberation Mono',monospace;">%#codegen</div>
<div class="t" style="left:282.30px;top:164.69px;font-size:12.8px;color:#1a1a1a;font-family:'Liberation Mono',monospace;">totalArea  = s.area+r.area;</div>
<div class="t" style="left:282.30px;top:181.69px;font-size:12.8px;color:#1a1a1a;font-family:'Liberation Mono',monospace;">distance = Shape.distanceBetweenShapes(s,r);</div>
<div class="t" style="left:282.30px;top:198.69px;font-size:12.8px;color:#1111ee;font-family:'Liberation Mono',monospace;">end</div>
<div class="t" style="left:277.00px;top:240.15px;font-size:14px;color:#222;transform:scaleX(0.9183);">Summary</div>
<div class="t" style="left:418.20px;top:240.15px;font-size:14px;color:#222;transform:scaleX(0.9364);">All Message...</div>
<div class="t" style="left:557.57px;top:240.15px;font-size:14px;color:#222;transform:scaleX(0.9320);">Build Logs</div>
<div class="t" style="left:698.50px;top:240.15px;font-size:14px;color:#222;transform:scaleX(0.9357);">Code Insigh...</div>
<div class="t" style="left:838.50px;top:240.15px;font-size:14px;color:#222;transform:scaleX(0.9245);">Variables</div>
<div class="t" style="left:256.50px;top:265.44px;font-size:12px;color:#2a2a2a;font-weight:bold;transform:scaleX(0.9936);">Name</div>
<div class="t" style="left:507.40px;top:265.44px;font-size:12px;color:#2a2a2a;font-weight:bold;transform:scaleX(0.9766);">Type</div>
<div class="t" style="left:587.50px;top:265.44px;font-size:12px;color:#2a2a2a;font-weight:bold;transform:scaleX(0.9204);">Size</div>
<div class="t" style="left:687.50px;top:265.44px;font-size:12px;color:#2a2a2a;font-weight:bold;transform:scaleX(0.8687);">Class</div>
<div class="t" style="left:272.30px;top:287.14px;font-size:12px;color:#3a3a3a;transform:scaleX(0.9684);">distance</div>
<div class="t" style="left:507.60px;top:286.84px;font-size:12px;color:#3a3a3a;transform:scaleX(1.0194);">Output</div>
<div class="t" style="left:587.40px;top:286.84px;font-size:12px;color:#3a3a3a;transform:scaleX(0.8000);">1</div>
<div class="t" style="left:595.50px;top:286.30px;font-size:13px;color:#3a3a3a;transform:scaleX(1.2857);">×</div>
<div class="t" style="left:608.80px;top:286.84px;font-size:12px;color:#3a3a3a;transform:scaleX(0.8000);">1</div>
<div class="t" style="left:687.50px;top:286.84px;font-size:12px;color:#3a3a3a;transform:scaleX(1.0066);">double</div>
<div class="t" style="left:272.30px;top:310.14px;font-size:12px;color:#3a3a3a;transform:scaleX(1.0051);">totalArea</div>
<div class="t" style="left:507.60px;top:309.84px;font-size:12px;color:#3a3a3a;transform:scaleX(1.0194);">Output</div>
<div class="t" style="left:587.40px;top:309.84px;font-size:12px;color:#3a3a3a;transform:scaleX(0.8000);">1</div>
<div class="t" style="left:595.50px;top:309.30px;font-size:13px;color:#3a3a3a;transform:scaleX(1.2857);">×</div>
<div class="t" style="left:608.80px;top:309.84px;font-size:12px;color:#3a3a3a;transform:scaleX(0.8000);">1</div>
<div class="t" style="left:687.50px;top:309.84px;font-size:12px;color:#3a3a3a;transform:scaleX(1.0066);">double</div>
<div class="t" style="left:272.80px;top:332.84px;font-size:12px;color:#3a3a3a;transform:scaleX(0.8750);">r</div>
<div class="t" style="left:506.56px;top:332.84px;font-size:12px;color:#3a3a3a;transform:scaleX(1.0434);">Input</div>
<div class="t" style="left:587.40px;top:332.84px;font-size:12px;color:#3a3a3a;transform:scaleX(0.8000);">1</div>
<div class="t" style="left:595.50px;top:332.30px;font-size:13px;color:#3a3a3a;transform:scaleX(1.2857);">×</div>
<div class="t" style="left:608.80px;top:332.84px;font-size:12px;color:#3a3a3a;transform:scaleX(0.8000);">1</div>
<div class="t" style="left:687.50px;top:332.84px;font-size:12px;color:#3a3a3a;transform:scaleX(0.9814);">Rhombus</div>
<div class="t" style="left:281.20px;top:359.84px;font-size:12px;color:#3a3a3a;transform:scaleX(0.9770);">centerX</div>
<div class="t" style="left:587.40px;top:359.84px;font-size:12px;color:#3a3a3a;transform:scaleX(0.8000);">1</div>
<div class="t" style="left:595.50px;top:359.30px;font-size:13px;color:#3a3a3a;transform:scaleX(1.2857);">×</div>
<div class="t" style="left:608.80px;top:359.84px;font-size:12px;color:#3a3a3a;transform:scaleX(0.8000);">1</div>
<div class="t" style="left:687.50px;top:359.84px;font-size:12px;color:#3a3a3a;transform:scaleX(1.0066);">double</div>
<div class="t" style="left:281.20px;top:382.84px;font-size:12px;color:#3a3a3a;transform:scaleX(0.9770);">centerY</div>
<div class="t" style="left:587.40px;top:382.84px;font-size:12px;color:#3a3a3a;transform:scaleX(0.8000);">1</div>
<div class="t" style="left:595.50px;top:382.30px;font-size:13px;color:#3a3a3a;transform:scaleX(1.2857);">×</div>
<div class="t" style="left:608.80px;top:382.84px;font-size:12px;color:#3a3a3a;transform:scaleX(0.8000);">1</div>
<div class="t" style="left:687.50px;top:382.84px;font-size:12px;color:#3a3a3a;transform:scaleX(1.0066);">double</div>
<div class="t" style="left:281.20px;top:405.84px;font-size:12px;color:#3a3a3a;transform:scaleX(0.9701);">diag1</div>
<div class="t" style="left:587.40px;top:405.84px;font-size:12px;color:#3a3a3a;transform:scaleX(0.8000);">1</div>
<div class="t" style="left:595.50px;top:405.30px;font-size:13px;color:#3a3a3a;transform:scaleX(1.2857);">×</div>
<div class="t" style="left:608.80px;top:405.84px;font-size:12px;color:#3a3a3a;transform:scaleX(0.8000);">1</div>
<div class="t" style="left:687.50px;top:405.84px;font-size:12px;color:#3a3a3a;transform:scaleX(1.0066);">double</div>
<div class="t" style="left:281.20px;top:428.84px;font-size:12px;color:#3a3a3a;transform:scaleX(0.9701);">diag2</div>
<div class="t" style="left:587.40px;top:428.84px;font-size:12px;color:#3a3a3a;transform:scaleX(0.8000);">1</div>
<div class="t" style="left:595.50px;top:428.30px;font-size:13px;color:#3a3a3a;transform:scaleX(1.2857);">×</div>
<div class="t" style="left:608.80px;top:428.84px;font-size:12px;color:#3a3a3a;transform:scaleX(0.8000);">1</div>
<div class="t" style="left:687.50px;top:428.84px;font-size:12px;color:#3a3a3a;transform:scaleX(1.0066);">double</div>
<div class="t" style="left:272.80px;top:451.84px;font-size:12px;color:#3a3a3a;transform:scaleX(0.8500);">s</div>
<div class="t" style="left:506.56px;top:451.84px;font-size:12px;color:#3a3a3a;transform:scaleX(1.0434);">Input</div>
<div class="t" style="left:587.40px;top:451.84px;font-size:12px;color:#3a3a3a;transform:scaleX(0.8000);">1</div>
<div class="t" style="left:595.50px;top:451.30px;font-size:13px;color:#3a3a3a;transform:scaleX(1.2857);">×</div>
<div class="t" style="left:608.80px;top:451.84px;font-size:12px;color:#3a3a3a;transform:scaleX(0.8000);">1</div>
<div class="t" style="left:687.50px;top:451.84px;font-size:12px;color:#3a3a3a;transform:scaleX(0.9354);">Square</div>
<div class="t" style="left:281.20px;top:478.84px;font-size:12px;color:#3a3a3a;transform:scaleX(0.9770);">centerX</div>
<div class="t" style="left:587.40px;top:478.84px;font-size:12px;color:#3a3a3a;transform:scaleX(0.8000);">1</div>
<div class="t" style="left:595.50px;top:478.30px;font-size:13px;color:#3a3a3a;transform:scaleX(1.2857);">×</div>
<div class="t" style="left:608.80px;top:478.84px;font-size:12px;color:#3a3a3a;transform:scaleX(0.8000);">1</div>
<div class="t" style="left:687.50px;top:478.84px;font-size:12px;color:#3a3a3a;transform:scaleX(1.0066);">double</div>
<div class="t" style="left:281.20px;top:501.84px;font-size:12px;color:#3a3a3a;transform:scaleX(0.9770);">centerY</div>
<div class="t" style="left:587.40px;top:501.84px;font-size:12px;color:#3a3a3a;transform:scaleX(0.8000);">1</div>
<div class="t" style="left:595.50px;top:501.30px;font-size:13px;color:#3a3a3a;transform:scaleX(1.2857);">×</div>
<div class="t" style="left:608.80px;top:501.84px;font-size:12px;color:#3a3a3a;transform:scaleX(0.8000);">1</div>
<div class="t" style="left:687.50px;top:501.84px;font-size:12px;color:#3a3a3a;transform:scaleX(1.0066);">double</div>
<div class="t" style="left:281.20px;top:524.84px;font-size:12px;color:#3a3a3a;transform:scaleX(0.9535);">side</div>
<div class="t" style="left:587.40px;top:524.84px;font-size:12px;color:#3a3a3a;transform:scaleX(0.8000);">1</div>
<div class="t" style="left:595.50px;top:524.30px;font-size:13px;color:#3a3a3a;transform:scaleX(1.2857);">×</div>
<div class="t" style="left:608.80px;top:524.84px;font-size:12px;color:#3a3a3a;transform:scaleX(0.8000);">1</div>
<div class="t" style="left:687.50px;top:524.84px;font-size:12px;color:#3a3a3a;transform:scaleX(1.0066);">double</div>
</body>
</html>
